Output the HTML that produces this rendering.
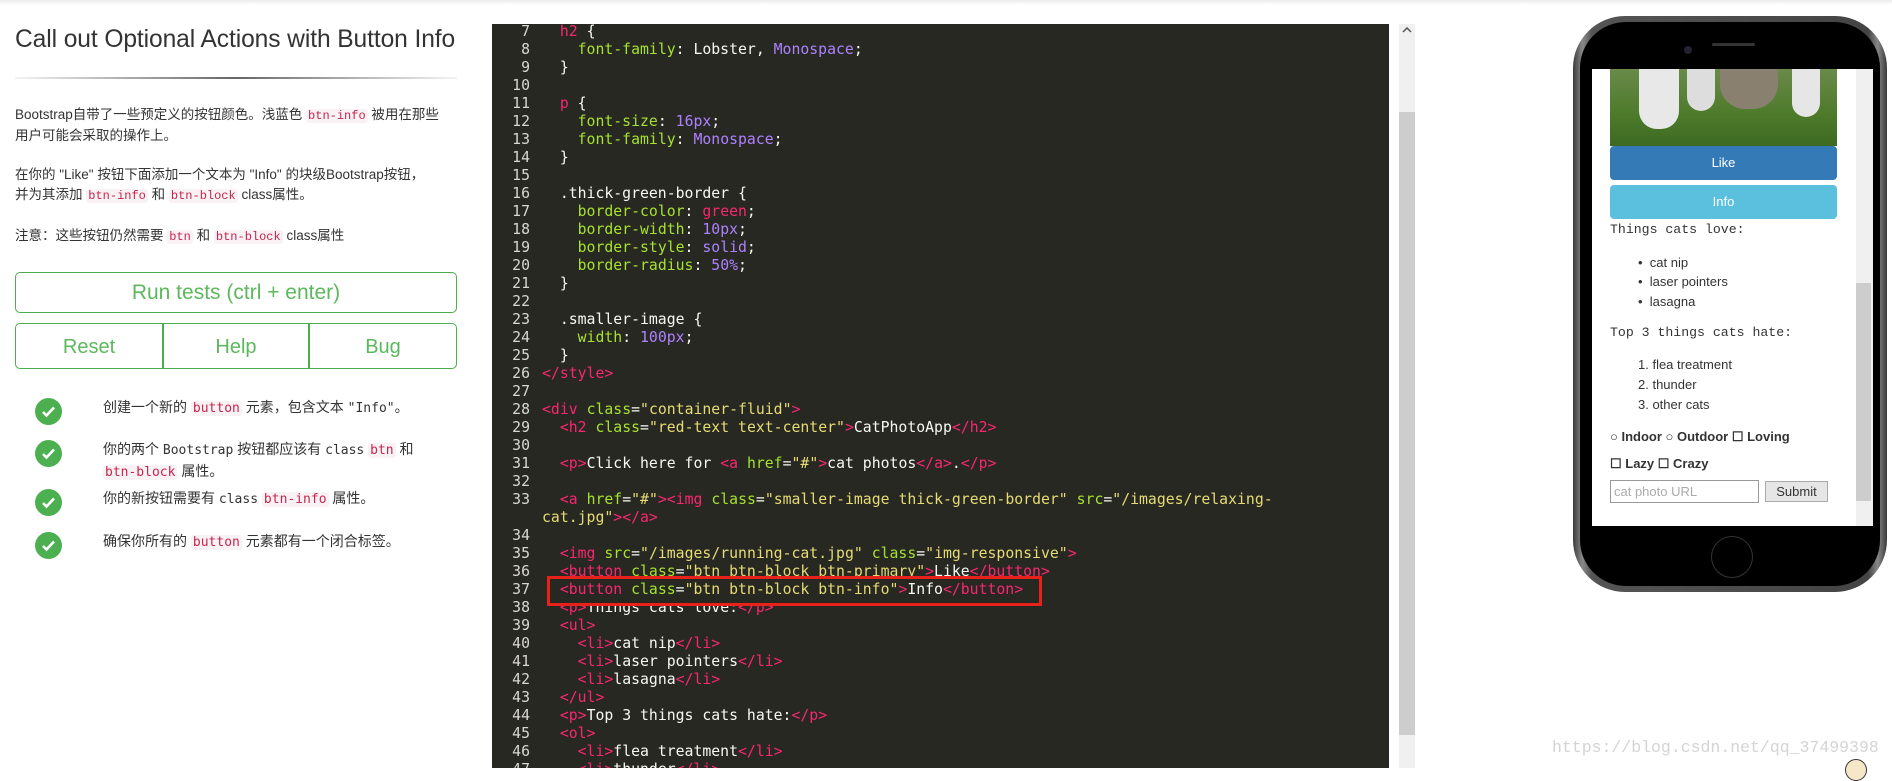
<!DOCTYPE html>
<html><head><meta charset="utf-8"><style>
*{margin:0;padding:0;box-sizing:border-box}
body{width:1892px;height:768px;overflow:hidden;background:#fff;position:relative;font-family:"Liberation Sans","Noto Sans CJK SC",sans-serif;color:#333}
.abs{position:absolute}
.topsh{left:0;top:0;width:1892px;height:5px;background:linear-gradient(#ececec,#fff)}
h2{position:absolute;left:15px;top:26px;font-weight:normal;font-size:24.6px;color:#333;white-space:nowrap;letter-spacing:-0.1px}
.rule{left:15px;top:77px;width:442px;height:2px;background:linear-gradient(90deg,#f4f4f4,#666 50%,#f4f4f4)}
.p{position:absolute;left:15px;font-size:13.5px;line-height:20px;color:#333;white-space:nowrap}
code{font-family:"Liberation Mono",monospace;font-size:12px;color:#c7254e;background:#f9f2f4;padding:0 2px;border-radius:3px}
.btn{position:absolute;border:1px solid #4cae4c;border-radius:5px;color:#5cb85c;font-size:20px;text-align:center}
.chk{position:absolute;left:35px;width:27px;height:27px;border-radius:50%;background:#4caf50}
.chk svg{position:absolute;left:6px;top:6px}
.ct{position:absolute;left:103px;font-size:14px;line-height:21px;font-family:"Liberation Sans","Noto Sans CJK SC",sans-serif;white-space:nowrap}
.ct .m{font-family:"DejaVu Sans Mono",monospace;font-size:13px}
.ct code{font-family:"DejaVu Sans Mono",monospace;font-size:13px}
.ed{left:492px;top:24px;width:897px;height:744px;background:#272822;overflow:hidden;font-family:"DejaVu Sans Mono",monospace;font-size:14.8px;color:#f8f8f2}
.ln{position:absolute;left:0;width:38px;text-align:right;color:#d8d8d0;height:18px;line-height:18px}
.cl{position:absolute;left:50px;height:18px;line-height:18px;white-space:pre}
.t{color:#f92672}.a{color:#a6e22e}.s{color:#e6db74}.v{color:#ae81ff}
.sb{left:1399px;top:24px;width:16px;height:744px;background:#f0f0f0}
.phone{left:1573px;top:16px;width:314px;height:576px;border-radius:52px;background:linear-gradient(90deg,#3a3a3a,#8a8a8a 3%,#555 6%,#444 94%,#888 97%,#3a3a3a);}
.pin{left:1580px;top:22px;width:300px;height:564px;border-radius:46px;background:#000}
.scr{left:1592px;top:69px;width:281px;height:457px;background:#fff;overflow:hidden}
.mono{font-family:"Liberation Mono",monospace;font-size:13.2px;color:#333}
.li{position:absolute;font-size:13px;color:#333;white-space:nowrap}
</style></head><body>
<div class="abs topsh"></div>
<h2>Call out Optional Actions with Button Info</h2>
<div class="abs rule"></div>
<div class="p" style="top:105px">Bootstrap自带了一些预定义的按钮颜色。浅蓝色 <code>btn-info</code> 被用在那些<br>用户可能会采取的操作上。</div>
<div class="p" style="top:165px">在你的 "Like" 按钮下面添加一个文本为 "Info" 的块级Bootstrap按钮，<br>并为其添加 <code>btn-info</code> 和 <code>btn-block</code> class属性。</div>
<div class="p" style="top:226px">注意：这些按钮仍然需要 <code>btn</code> 和 <code>btn-block</code> class属性</div>
<div class="btn" style="left:15px;top:272px;width:442px;height:41px;line-height:39px;font-size:21px">Run tests (ctrl + enter)</div>
<div class="btn" style="left:15px;top:323px;width:148px;height:46px;line-height:46px;border-radius:5px 0 0 5px">Reset</div>
<div class="btn" style="left:162px;top:323px;width:148px;height:46px;line-height:46px;border-radius:0;border-width:1px 2px">Help</div>
<div class="btn" style="left:309px;top:323px;width:148px;height:46px;line-height:46px;border-radius:0 5px 5px 0">Bug</div>

<div class="chk" style="top:398px"><svg width="15" height="15" viewBox="0 0 15 15"><path d="M2 8l3.5 3.5L13 3.5" fill="none" stroke="#fff" stroke-width="2.6"/></svg></div>
<div class="chk" style="top:440px"><svg width="15" height="15" viewBox="0 0 15 15"><path d="M2 8l3.5 3.5L13 3.5" fill="none" stroke="#fff" stroke-width="2.6"/></svg></div>
<div class="chk" style="top:489px"><svg width="15" height="15" viewBox="0 0 15 15"><path d="M2 8l3.5 3.5L13 3.5" fill="none" stroke="#fff" stroke-width="2.6"/></svg></div>
<div class="chk" style="top:532px"><svg width="15" height="15" viewBox="0 0 15 15"><path d="M2 8l3.5 3.5L13 3.5" fill="none" stroke="#fff" stroke-width="2.6"/></svg></div>
<div class="ct" style="top:397px">创建一个新的 <code>button</code> 元素，包含文本 <span class="m">"Info"</span>。</div>
<div class="ct" style="top:439px">你的两个 <span class="m">Bootstrap</span> 按钮都应该有 <span class="m">class</span> <code>btn</code> 和<br><code>btn-block</code> 属性。</div>
<div class="ct" style="top:488px">你的新按钮需要有 <span class="m">class</span> <code>btn-info</code> 属性。</div>
<div class="ct" style="top:531px">确保你所有的 <code>button</code> 元素都有一个闭合标签。</div>

<div class="abs ed">
<div class="ln" style="top:-1px">7</div><div class="cl" style="top:-1px">  <span class="t">h2</span> {</div>
<div class="ln" style="top:17px">8</div><div class="cl" style="top:17px">    <span class="a">font-family</span>: Lobster, <span class="v">Monospace</span>;</div>
<div class="ln" style="top:35px">9</div><div class="cl" style="top:35px">  }</div>
<div class="ln" style="top:53px">10</div>
<div class="ln" style="top:71px">11</div><div class="cl" style="top:71px">  <span class="t">p</span> {</div>
<div class="ln" style="top:89px">12</div><div class="cl" style="top:89px">    <span class="a">font-size</span>: <span class="v">16px</span>;</div>
<div class="ln" style="top:107px">13</div><div class="cl" style="top:107px">    <span class="a">font-family</span>: <span class="v">Monospace</span>;</div>
<div class="ln" style="top:125px">14</div><div class="cl" style="top:125px">  }</div>
<div class="ln" style="top:143px">15</div>
<div class="ln" style="top:161px">16</div><div class="cl" style="top:161px">  .thick-green-border {</div>
<div class="ln" style="top:179px">17</div><div class="cl" style="top:179px">    <span class="a">border-color</span>: <span class="t">green</span>;</div>
<div class="ln" style="top:197px">18</div><div class="cl" style="top:197px">    <span class="a">border-width</span>: <span class="v">10px</span>;</div>
<div class="ln" style="top:215px">19</div><div class="cl" style="top:215px">    <span class="a">border-style</span>: <span class="v">solid</span>;</div>
<div class="ln" style="top:233px">20</div><div class="cl" style="top:233px">    <span class="a">border-radius</span>: <span class="v">50%</span>;</div>
<div class="ln" style="top:251px">21</div><div class="cl" style="top:251px">  }</div>
<div class="ln" style="top:269px">22</div>
<div class="ln" style="top:287px">23</div><div class="cl" style="top:287px">  .smaller-image {</div>
<div class="ln" style="top:305px">24</div><div class="cl" style="top:305px">    <span class="a">width</span>: <span class="v">100px</span>;</div>
<div class="ln" style="top:323px">25</div><div class="cl" style="top:323px">  }</div>
<div class="ln" style="top:341px">26</div><div class="cl" style="top:341px"><span class="t">&lt;/style&gt;</span></div>
<div class="ln" style="top:359px">27</div>
<div class="ln" style="top:377px">28</div><div class="cl" style="top:377px"><span class="t">&lt;div</span> <span class="a">class</span>=<span class="s">"container-fluid"</span><span class="t">&gt;</span></div>
<div class="ln" style="top:395px">29</div><div class="cl" style="top:395px">  <span class="t">&lt;h2</span> <span class="a">class</span>=<span class="s">"red-text text-center"</span><span class="t">&gt;</span>CatPhotoApp<span class="t">&lt;/h2&gt;</span></div>
<div class="ln" style="top:413px">30</div>
<div class="ln" style="top:431px">31</div><div class="cl" style="top:431px">  <span class="t">&lt;p&gt;</span>Click here for <span class="t">&lt;a</span> <span class="a">href</span>=<span class="s">"#"</span><span class="t">&gt;</span>cat photos<span class="t">&lt;/a&gt;</span>.<span class="t">&lt;/p&gt;</span></div>
<div class="ln" style="top:449px">32</div>
<div class="ln" style="top:467px">33</div><div class="cl" style="top:467px">  <span class="t">&lt;a</span> <span class="a">href</span>=<span class="s">"#"</span><span class="t">&gt;&lt;img</span> <span class="a">class</span>=<span class="s">"smaller-image thick-green-border"</span> <span class="a">src</span>=<span class="s">"/images/relaxing-</span></div>
<div class="cl" style="top:485px"><span class="s">cat.jpg"</span><span class="t">&gt;&lt;/a&gt;</span></div>
<div class="ln" style="top:503px">34</div>
<div class="ln" style="top:521px">35</div><div class="cl" style="top:521px">  <span class="t">&lt;img</span> <span class="a">src</span>=<span class="s">"/images/running-cat.jpg"</span> <span class="a">class</span>=<span class="s">"img-responsive"</span><span class="t">&gt;</span></div>
<div class="ln" style="top:539px">36</div><div class="cl" style="top:539px">  <span class="t">&lt;button</span> <span class="a">class</span>=<span class="s">"btn btn-block btn-primary"</span><span class="t">&gt;</span>Like<span class="t">&lt;/button&gt;</span></div>
<div class="ln" style="top:575px">38</div><div class="cl" style="top:575px">  <span class="t">&lt;p&gt;</span>Things cats love:<span class="t">&lt;/p&gt;</span></div>
<div class="abs" style="left:55px;top:552px;width:495px;height:30px;background:#272822;border:3px solid #e8211a"></div>
<div class="ln" style="top:557px">37</div><div class="cl" style="top:557px">  <span class="t">&lt;button</span> <span class="a">class</span>=<span class="s">"btn btn-block btn-info"</span><span class="t">&gt;</span>Info<span class="t">&lt;/button&gt;</span></div>
<div class="ln" style="top:593px">39</div><div class="cl" style="top:593px">  <span class="t">&lt;ul&gt;</span></div>
<div class="ln" style="top:611px">40</div><div class="cl" style="top:611px">    <span class="t">&lt;li&gt;</span>cat nip<span class="t">&lt;/li&gt;</span></div>
<div class="ln" style="top:629px">41</div><div class="cl" style="top:629px">    <span class="t">&lt;li&gt;</span>laser pointers<span class="t">&lt;/li&gt;</span></div>
<div class="ln" style="top:647px">42</div><div class="cl" style="top:647px">    <span class="t">&lt;li&gt;</span>lasagna<span class="t">&lt;/li&gt;</span></div>
<div class="ln" style="top:665px">43</div><div class="cl" style="top:665px">  <span class="t">&lt;/ul&gt;</span></div>
<div class="ln" style="top:683px">44</div><div class="cl" style="top:683px">  <span class="t">&lt;p&gt;</span>Top 3 things cats hate:<span class="t">&lt;/p&gt;</span></div>
<div class="ln" style="top:701px">45</div><div class="cl" style="top:701px">  <span class="t">&lt;ol&gt;</span></div>
<div class="ln" style="top:719px">46</div><div class="cl" style="top:719px">    <span class="t">&lt;li&gt;</span>flea treatment<span class="t">&lt;/li&gt;</span></div>
<div class="ln" style="top:737px">47</div><div class="cl" style="top:737px">    <span class="t">&lt;li&gt;</span>thunder<span class="t">&lt;/li&gt;</span></div>
</div>
<div class="abs sb"></div>
<div class="abs" style="left:1399px;top:112px;width:16px;height:623px;background:#cdcdcd"></div>
<svg class="abs" style="left:1402px;top:27px" width="10" height="6" viewBox="0 0 10 6"><path d="M1 5l4-4 4 4" fill="none" stroke="#555" stroke-width="1.5"/></svg>

<div class="abs phone"></div>
<div class="abs pin"></div>
<div class="abs" style="left:1684px;top:46px;width:8px;height:8px;border-radius:50%;background:#223"></div>
<div class="abs" style="left:1712px;top:43px;width:43px;height:3px;border-radius:2px;background:#333"></div>
<div class="abs" style="left:1711px;top:536px;width:42px;height:42px;border-radius:50%;border:1.5px solid #333"></div>
<div class="abs scr">
  <div class="abs" style="left:18px;top:0;width:227px;height:77px;background:linear-gradient(180deg,#6a8a4a,#4d7a2a 60%,#3c6a22)"></div>
  <div class="abs" style="left:47px;top:0;width:40px;height:60px;border-radius:0 0 18px 18px;background:#e8e8e8"></div>
  <div class="abs" style="left:95px;top:0;width:28px;height:42px;border-radius:0 0 14px 14px;background:#ddd"></div>
  <div class="abs" style="left:128px;top:0;width:58px;height:40px;border-radius:0 0 25px 25px;background:#8a8070"></div>
  <div class="abs" style="left:200px;top:0;width:28px;height:48px;border-radius:0 0 14px 14px;background:#e6e6e6"></div>
  <div class="abs" style="left:18px;top:77px;width:227px;height:34px;background:#337ab7;border-radius:4px;color:#fff;font-size:13px;text-align:center;line-height:34px">Like</div>
  <div class="abs" style="left:18px;top:116px;width:227px;height:34px;background:#5bc0de;border-radius:4px;color:#fff;font-size:13px;text-align:center;line-height:34px">Info</div>
  <div class="abs mono" style="left:18px;top:153px">Things cats love:</div>
  <div class="li" style="left:46px;top:186px">•&nbsp; cat nip</div>
  <div class="li" style="left:46px;top:205px">•&nbsp; laser pointers</div>
  <div class="li" style="left:46px;top:225px">•&nbsp; lasagna</div>
  <div class="abs mono" style="left:18px;top:256px">Top 3 things cats hate:</div>
  <div class="li" style="left:46px;top:288px">1. flea treatment</div>
  <div class="li" style="left:46px;top:308px">2. thunder</div>
  <div class="li" style="left:46px;top:328px">3. other cats</div>
  <div class="li" style="left:18px;top:360px;font-weight:bold">○ Indoor ○ Outdoor ☐ Loving</div>
  <div class="li" style="left:18px;top:387px;font-weight:bold">☐ Lazy ☐ Crazy</div>
  <div class="abs" style="left:18px;top:411px;width:149px;height:23px;border:1px solid #999;color:#aaa;font-size:13px;padding-left:3px;line-height:21px">cat photo URL</div>
  <div class="abs" style="left:173px;top:412px;width:63px;height:21px;border:1px solid #aaa;background:#e6e6e6;font-size:13px;text-align:center;line-height:19px">Submit</div>
  <div class="abs" style="left:264px;top:0;width:17px;height:457px;background:#f0f0f0"></div>
  <div class="abs" style="left:264px;top:214px;width:15px;height:218px;background:#cdcdcd"></div>
</div>
<div class="abs" style="left:1552px;top:738px;font-family:'Liberation Mono',monospace;font-size:16.5px;color:#d4d4d4;white-space:nowrap">https://blog.csdn.net/qq_37499398</div>
<div class="abs" style="left:1845px;top:759px;width:22px;height:22px;border-radius:50%;border:1.5px solid #333;background:#f6e7c8"></div>
</body></html>
